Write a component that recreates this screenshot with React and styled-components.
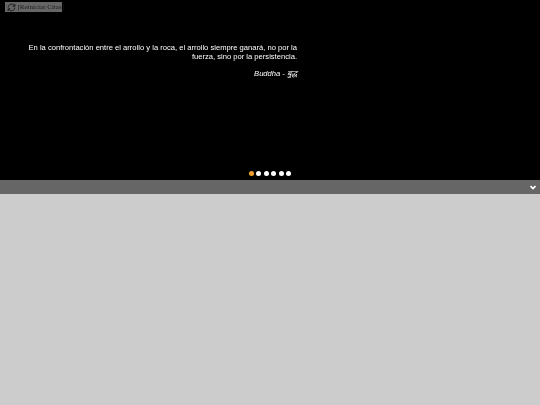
import React from "react";
import styled, { createGlobalStyle } from "styled-components";

const GlobalStyle = createGlobalStyle`
  html, body {
    margin: 0;
    padding: 0;
    background-color: #cccccc;
  }
`;

const Page = styled.div`
  width: 540px;
  height: 405px;
  overflow: hidden;
  display: flex;
  flex-direction: column;
  background-color: #cccccc;
`;

const Header = styled.div`
  height: 180px;
  box-sizing: border-box;
  padding: 2px 0 0 5px;
  display: flex;
  flex-direction: column;
  background-color: black;
`;

const ResetButton = styled.div`
  width: 57px;
  height: 10px;
  display: flex;
  align-items: center;
  gap: 1.5px;
  padding-left: 2px;
  box-sizing: border-box;
  background-color: #666666;
  color: #1c1c1c;
  font-family: "Liberation Serif", serif;
  font-size: 7px;
  white-space: nowrap;
  filter: blur(0.25px);
`;

const RefreshIcon = styled.svg`
  flex-shrink: 0;
`;

const QuoteBox = styled.div`
  width: 269px;
  margin: 31px 0 0 23px;
  color: white;
  font-family: "Liberation Sans", Arial, sans-serif;
  font-size: 7.6px;
  line-height: 9px;
  text-align: right;
  filter: blur(0.25px);
`;

const Quote = styled.p`
  margin: 0;
`;

const Author = styled.p`
  margin: 8px 0 0;
  font-style: italic;
`;

const Dots = styled.div`
  margin-top: auto;
  padding: 0 5px 4px 0;
  display: flex;
  justify-content: center;
  gap: 2.5px;
`;

const Dot = styled.span`
  width: 5px;
  height: 5px;
  border-radius: 50%;
  background-color: ${(p) => (p.$active ? "#f0a030" : "white")};
`;

const Bar = styled.div`
  height: 14px;
  padding-right: 4px;
  display: flex;
  justify-content: flex-end;
  align-items: center;
  background-color: #666666;
`;

function App() {
  return (
    <Page>
      <GlobalStyle />
      <Header>
        <ResetButton>
          <RefreshIcon width="9" height="9" viewBox="0 0 24 24" fill="none" stroke="#1c1c1c" strokeWidth="2.6">
            <path d="M21 12a9 9 0 0 1-15.5 6.2L3 15.5" />
            <path d="M3 12a9 9 0 0 1 15.5-6.2L21 8.5" />
            <path d="M21 2.5v6h-6" />
            <path d="M3 21.5v-6h6" />
          </RefreshIcon>
          [Reiniciar Citas]
        </ResetButton>
        <QuoteBox>
          <Quote>
            En la confrontación entre el arrollo y la roca, el arrollo siempre ganará, no por la
            fuerza, sino por la persistencia.
          </Quote>
          <Author>Buddha - बुद्ध</Author>
        </QuoteBox>
        <Dots>
          <Dot $active />
          <Dot />
          <Dot />
          <Dot />
          <Dot />
          <Dot />
        </Dots>
      </Header>
      <Bar>
        <svg width="6" height="5" viewBox="0 0 6 5" fill="none" stroke="white" strokeWidth="1.7">
          <path d="M0.5 1 L3 3.5 L5.5 1" />
        </svg>
      </Bar>
    </Page>
  );
}

export default App;
